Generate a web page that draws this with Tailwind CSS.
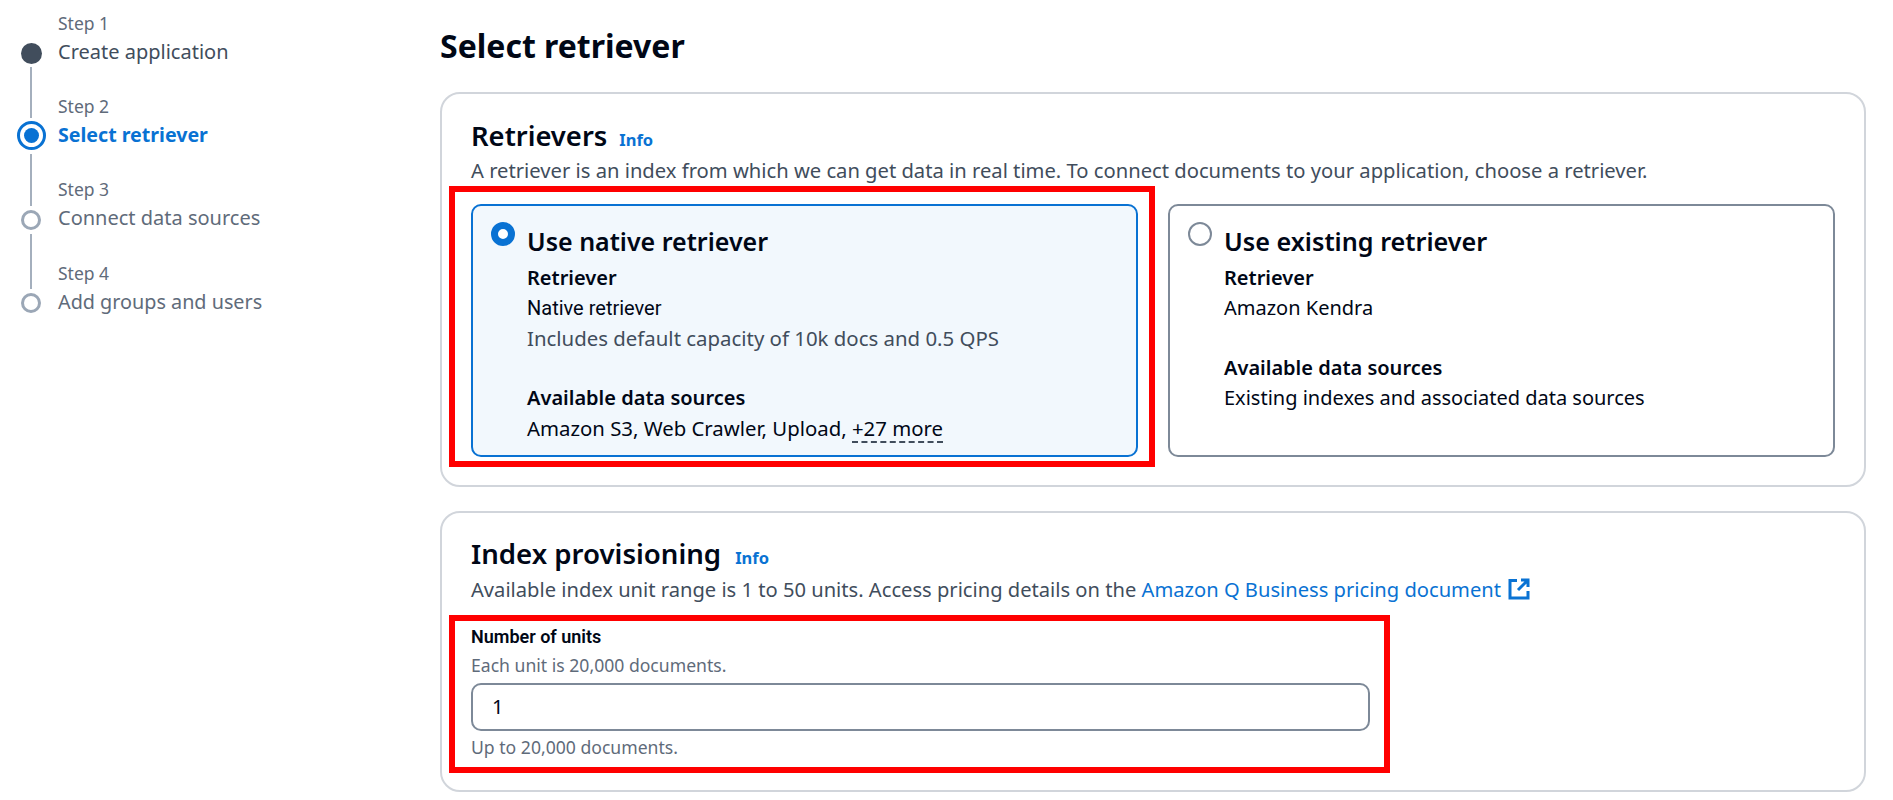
<!DOCTYPE html>
<html lang="en">
<head>
  <meta charset="UTF-8" />
  <title>Select retriever</title>
  <script src="https://cdn.jsdelivr.net/npm/@tailwindcss/browser@4"></script>
</head>
<body class="bg-white h-[800px] overflow-hidden font-['Noto_Sans',sans-serif] text-[#000716]">
  <div class="flex">

    <!-- Steps -->
    <nav class="w-[440px] shrink-0 flex">
      <div class="w-[58px] flex flex-col items-center pl-[4px] pt-[43px]">
        <div class="w-[21px] h-[21px] rounded-full bg-[#414d5c] shrink-0"></div>
        <div class="w-[2px] h-[51px] mt-[3px] bg-[#a4afbd]"></div>
        <div class="w-[29px] h-[29px] mt-[3px] rounded-full border-[3px] border-[#0972d3] flex items-center justify-center shrink-0">
          <div class="w-[15px] h-[15px] rounded-full bg-[#0972d3]"></div>
        </div>
        <div class="w-[2px] h-[52px] mt-[4px] bg-[#a4afbd]"></div>
        <div class="w-[20px] h-[20px] mt-[4px] rounded-full border-[3px] border-[#9ba7b6] shrink-0"></div>
        <div class="w-[2px] h-[55px] mt-[4px] bg-[#a4afbd]"></div>
        <div class="w-[20px] h-[20px] mt-[4px] rounded-full border-[3px] border-[#9ba7b6] shrink-0"></div>
      </div>
      <div class="pt-[9px] text-[#414d5c]">
        <div class="h-[83px]">
          <p class="text-[17.5px] leading-[28px] text-[#5f6b7a]">Step 1</p>
          <p class="text-[20px] leading-[30px]">Create application</p>
        </div>
        <div class="h-[83px]">
          <p class="text-[17.5px] leading-[28px] text-[#5f6b7a]">Step 2</p>
          <p class="text-[19.6px] leading-[30px] font-bold text-[#0972d3]">Select retriever</p>
        </div>
        <div class="h-[84px]">
          <p class="text-[17.5px] leading-[28px] text-[#5f6b7a]">Step 3</p>
          <p class="text-[20px] leading-[30px] text-[#5f6b7a]">Connect data sources</p>
        </div>
        <div>
          <p class="text-[17.5px] leading-[28px] text-[#5f6b7a]">Step 4</p>
          <p class="text-[19.8px] leading-[30px] text-[#5f6b7a]">Add groups and users</p>
        </div>
      </div>
    </nav>

    <main class="w-[1426px] pt-[24px]">
      <h1 class="text-[32px] leading-[44px] font-bold">Select retriever</h1>

      <!-- Retrievers -->
      <section class="relative mt-[24px] h-[395px] border-2 border-[#d1d5db] rounded-[20px] pl-[29px] pt-[24px]">
        <div class="flex items-baseline gap-[12px]">
          <h2 class="text-[27.4px] leading-[36px] font-semibold">Retrievers</h2>
          <a class="text-[16.5px] font-bold text-[#0972d3]">Info</a>
        </div>
        <p class="text-[20.2px] leading-[30px] mt-[1px] text-[#414d5c]">A retriever is an index from which we can get data in real time. To connect documents to your application, choose a retriever.</p>
        <div class="flex gap-[30px] mt-[19px]">
          <div class="w-[667px] h-[253px] border-2 border-[#0972d3] bg-[#f2f8fd] rounded-[10px] flex pl-[18px] pt-[16px]">
            <div class="w-[24px] h-[24px] rounded-full border-[7px] border-[#0972d3] bg-white shrink-0"></div>
            <div class="ml-[12px] text-[20px] leading-[30px]">
              <h3 class="text-[25px] leading-[38px] font-semibold mb-[3px]">Use native retriever</h3>
              <p class="font-semibold">Retriever</p>
              <p class="font-['Roboto',sans-serif]">Native retriever</p>
              <p class="text-[20.4px] text-[#414d5c]">Includes default capacity of 10k docs and 0.5 QPS</p>
              <p class="font-semibold mt-[30px]">Available data sources</p>
              <p class="text-[20.35px]">Amazon S3, Web Crawler, Upload, <span class="inline-block leading-[25px] border-b-2 border-dashed border-[#414d5c]">+27 more</span></p>
            </div>
          </div>
          <div class="w-[667px] h-[253px] border-2 border-[#7d8998] rounded-[10px] flex pl-[18px] pt-[16px]">
            <div class="w-[24px] h-[24px] rounded-full border-2 border-[#7d8998] bg-white shrink-0"></div>
            <div class="ml-[12px] text-[20px] leading-[30px]">
              <h3 class="text-[25.2px] leading-[38px] font-semibold mb-[3px]">Use existing retriever</h3>
              <p class="font-semibold">Retriever</p>
              <p>Amazon Kendra</p>
              <p class="font-semibold mt-[30px]">Available data sources</p>
              <p>Existing indexes and associated data sources</p>
            </div>
          </div>
        </div>
        <!-- highlight -->
        <div class="absolute left-[7px] top-[92px] w-[706px] h-[281px] border-[6px] border-[#ff0000]"></div>
      </section>

      <!-- Index provisioning -->
      <section class="relative mt-[24px] h-[281px] border-2 border-[#d1d5db] rounded-[20px] pl-[29px] pt-[22px]">
        <div class="flex items-baseline gap-[14px]">
          <h2 class="text-[27.6px] leading-[36px] font-semibold">Index provisioning</h2>
          <a class="text-[16.5px] font-bold text-[#0972d3]">Info</a>
        </div>
        <p class="flex items-center text-[20.15px] leading-[30px] mt-[3px] text-[#414d5c]">
          Available index unit range is 1 to 50 units. Access pricing details on the&nbsp;<a class="text-[#0972d3]">Amazon Q Business pricing document</a>
          <svg class="ml-[7px]" width="22" height="22" viewBox="0 0 22 22" fill="none" stroke="#0972d3" stroke-width="3">
            <path d="M9 2.5H2v17.5h18v-7" />
            <path d="M13 2h7v7M20 2 10 12" />
          </svg>
        </p>
        <div class="mt-[20px]">
          <p class="font-['Roboto',sans-serif] text-[18px] leading-[26px] font-semibold">Number of units</p>
          <p class="text-[17.6px] leading-[24px] text-[#5f6b7a] mt-[3px]">Each unit is 20,000 documents.</p>
          <div class="w-[899px] h-[48px] mt-[6px] border-2 border-[#7d8998] rounded-[10px] flex items-center pl-[19px] text-[20px]">1</div>
          <p class="text-[17.6px] leading-[24px] text-[#5f6b7a] mt-[4px]">Up to 20,000 documents.</p>
        </div>
        <!-- highlight -->
        <div class="absolute left-[7px] top-[102px] w-[941px] h-[158px] border-[6px] border-[#ff0000]"></div>
      </section>
    </main>
  </div>
</body>
</html>
